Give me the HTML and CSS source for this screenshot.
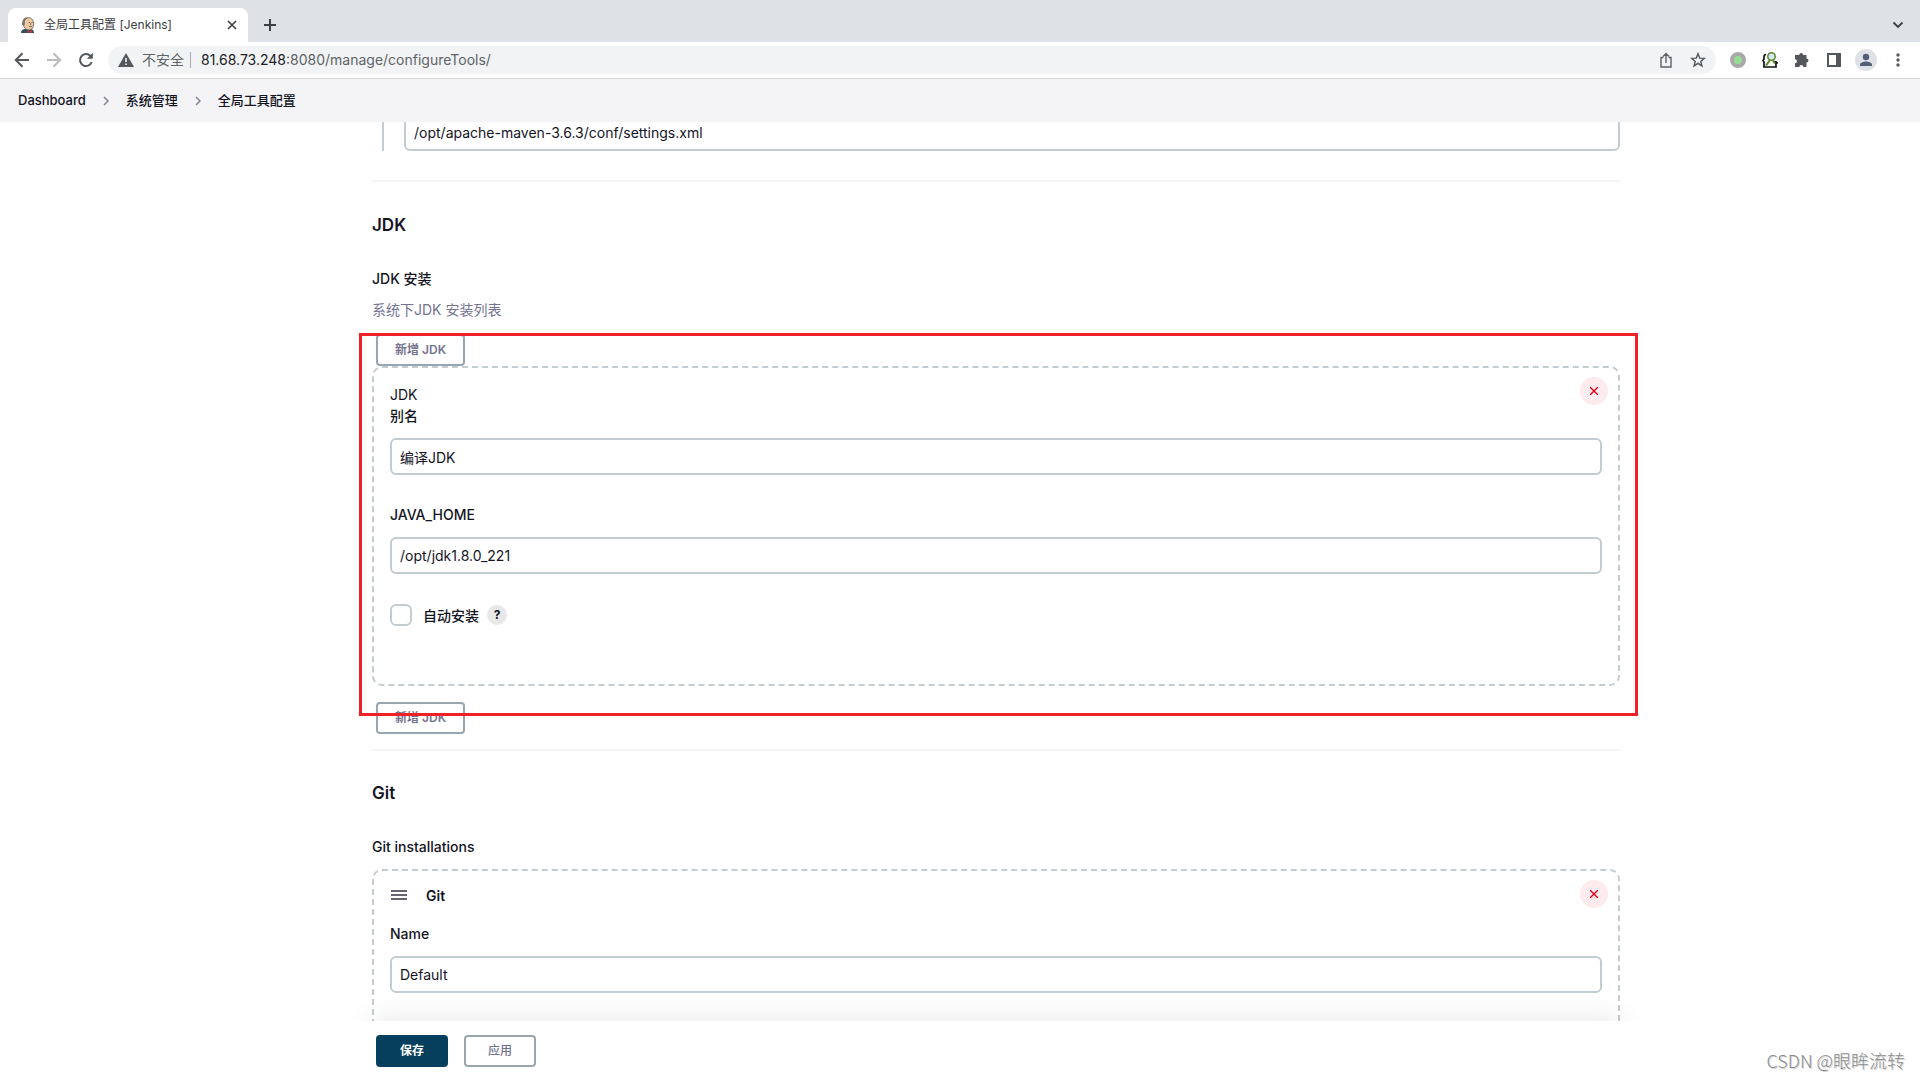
FILE: index.html
```html
<!DOCTYPE html>
<html lang="zh-CN">
<head>
<meta charset="utf-8">
<title>全局工具配置 [Jenkins]</title>
<link rel="stylesheet" href="styles.css">
</head>
<body>
<div class="tabstrip">
  <div class="tab">
    <svg class="favicon" width="16" height="16" viewBox="0 0 16 16"><path d="M1 16c0-3 2-4 4-4h5c3 0 4 2 4 4z" fill="#335061"/><path d="M3 5C3 1.500 5.500.7 8 .7s5.600 1.300 5.600 5.800c0 4-1.600 6.500-4.600 6.500-3.500 0-6-3-6-8z" fill="#edc9a0" stroke="#49423d" stroke-width=".7"/><path d="M3 4c.6-2.500 2.500-3 4.500-3L5 3.500 4.700 8 3.300 9C1.500 7.500 2 6 3 4z" fill="#77716b"/><path d="M8.500 5.500h1.500m1.500 0h1M9 9.500h3M10.700 6v2" stroke="#594335" stroke-width=".7" fill="none"/><path d="M7.500 13l2 1.200 2-1.200v3l-2-.8-2 .8z" fill="#d33833"/></svg>
    <span class="tab-title">全局工具配置 [Jenkins]</span>
    <button class="icon-btn" aria-label="关闭标签页"><svg width="10" height="10" viewBox="0 0 10 10"><path d="M1 1l8 8M9 1L1 9" stroke="#3c4043" stroke-width="1.600"/></svg></button>
  </div>
  <button class="icon-btn new-tab" aria-label="新标签页"><svg width="14" height="14" viewBox="0 0 14 14"><path d="M7 1v12M1 7h12" stroke="#3c4043" stroke-width="2"/></svg></button>
  <button class="icon-btn tab-search" aria-label="搜索标签页"><svg width="12" height="8" viewBox="0 0 12 8"><path d="M1.500 1.500L6 6l4.500-4.500" fill="none" stroke="#3c4043" stroke-width="1.800"/></svg></button>
</div>
<div class="toolbar">
  <div class="nav">
    <button class="icon-btn" aria-label="后退"><svg width="16" height="16" viewBox="0 0 16 16"><path d="M15 8H2M8.500 1.300L1.800 8l6.700 6.700" fill="none" stroke="#54585d" stroke-width="2"/></svg></button>
    <button class="icon-btn" aria-label="前进"><svg width="16" height="16" viewBox="0 0 16 16"><path d="M1 8h13M7.500 1.300L14.200 8l-6.700 6.700" fill="none" stroke="#bbbdbf" stroke-width="2"/></svg></button>
    <button class="icon-btn" aria-label="重新加载"><svg width="16" height="16" viewBox="0 0 16 16"><path d="M13.700 10a6 6 0 1 1-1.200-6" fill="none" stroke="#54585d" stroke-width="2"/><path d="M14.800.8v6H8.800z" fill="#54585d"/></svg></button>
  </div>
  <div class="omnibox">
    <svg width="16" height="14" viewBox="0 0 16 14"><path d="M8 0l8 14H0z" fill="#54585d"/><path d="M8 5v4M8 10.500v1.500" stroke="#f1f3f4" stroke-width="1.600"/></svg>
    <span class="insecure">不安全</span>
    <span class="url"><b>81.68.73.248</b>:8080/manage/configureTools/</span>
    <button class="icon-btn" aria-label="分享"><svg width="12" height="16" viewBox="0 0 12 16"><path d="M3.500 5.500H1V15h10V5.500H8.500M6 11V2M3 4.500l3-3 3 3" fill="none" stroke="#5f6368" stroke-width="1.400"/></svg></button>
    <button class="icon-btn star" aria-label="收藏"><svg width="16" height="16" viewBox="0 0 16 16"><path d="M8 1.800l1.700 4.300 4.600.3-3.500 3 1.100 4.500L8 11.400l-3.900 2.500 1.100-4.500-3.500-3 4.600-.3z" fill="none" stroke="#54585d" stroke-width="1.400"/></svg></button>
  </div>
  <div class="extensions">
    <svg width="16" height="16" viewBox="0 0 16 16"><circle cx="8" cy="8" r="6" fill="#95dc94" stroke="#a9a7aa" stroke-width="4"/></svg>
    <svg width="16" height="16" viewBox="0 0 16 16"><path d="M4 2.500Q2 2.500 2 5v2L1 8.500 2 10v5h12v-3.500l1-.7-1-1h-2" fill="none" stroke="#111" stroke-width="1.700"/><circle cx="9.500" cy="4.500" r="3.700" fill="#d7e8f8" stroke="#568629" stroke-width="1.500"/><path d="M8 8l-4 5.500M11 8.500l2 3" stroke="#568629" stroke-width="2"/></svg>
    <svg width="16" height="16" viewBox="0 0 16 16"><path d="M2 3h3.200a2 2 0 0 1 4 0h3.300v3.500a2 2 0 0 1 0 4V15H9.400a2 2 0 0 0-4 0H1v-3.800a2 2 0 0 0 0-4V3z" fill="#54585d"/></svg>
    <svg width="16" height="16" viewBox="0 0 16 16"><path d="M1 1h14v14H1z" fill="#54585d"/><path d="M3 3h7v10H3z" fill="#fff"/></svg>
  </div>
  <svg class="avatar" width="22" height="22" viewBox="0 0 22 22"><circle cx="11" cy="11" r="11" fill="#dee1e6"/><circle cx="11" cy="8" r="3.200" fill="#535e76"/><path d="M5 17v-1.500c0-2 4-3 6-3s6 1 6 3V17z" fill="#535e76"/></svg>
  <button class="icon-btn menu" aria-label="菜单"><svg width="4" height="14" viewBox="0 0 4 14"><g fill="#54585d"><circle cx="2" cy="2" r="1.700"/><circle cx="2" cy="7" r="1.700"/><circle cx="2" cy="12" r="1.700"/></g></svg></button>
</div>
<nav class="breadcrumbs">
  <a href="#">Dashboard</a>
  <svg width="6" height="10" viewBox="0 0 6 10"><path d="M1 1l4 4-4 4" fill="none" stroke="#82828c" stroke-width="1.500"/></svg>
  <a href="#">系统管理</a>
  <svg width="6" height="10" viewBox="0 0 6 10"><path d="M1 1l4 4-4 4" fill="none" stroke="#82828c" stroke-width="1.500"/></svg>
  <a href="#">全局工具配置</a>
</nav>
<main class="page">
  <form class="config" id="config">
    <div class="nested"><input class="text" type="text" aria-label="文件路径" value="/opt/apache-maven-3.6.3/conf/settings.xml"></div>
    <section class="section">
      <h2>JDK</h2>
      <div class="label">JDK 安装</div>
      <div class="description">系统下JDK 安装列表</div>
      <div class="list">
        <button type="button" class="btn">新增 JDK</button>
        <div class="chunk">
          <button type="button" class="delete" aria-label="删除"><svg width="8" height="8" viewBox="0 0 8 8"><path d="M0 0l8 8M8 0L0 8" stroke="#e6001f" stroke-width="1.400"/></svg></button>
          <div class="kind">JDK</div>
          <div class="field"><label class="label" for="jdk-name">别名</label><input class="text" id="jdk-name" type="text" value="编译JDK"></div>
          <div class="field"><label class="label" for="java-home">JAVA_HOME</label><input class="text" id="java-home" type="text" value="/opt/jdk1.8.0_221"></div>
          <div class="check"><input type="checkbox" id="auto"><label class="label" for="auto">自动安装</label><button type="button" class="help">?</button></div>
        </div>
        <button type="button" class="btn last">新增 JDK</button>
        <div class="highlight"></div>
      </div>
    </section>
    <section class="section">
      <h2>Git</h2>
      <div class="label">Git installations</div>
      <div class="chunk">
        <button type="button" class="delete" aria-label="删除"><svg width="8" height="8" viewBox="0 0 8 8"><path d="M0 0l8 8M8 0L0 8" stroke="#e6001f" stroke-width="1.400"/></svg></button>
        <div class="chunk-title"><svg width="16" height="10" viewBox="0 0 16 10"><path d="M0 1h16M0 5h16M0 9h16" stroke="#333344" stroke-width="1.500"/></svg>Git</div>
        <div class="field"><label class="label" for="git-name">Name</label><input class="text" id="git-name" type="text" value="Default"></div>
      </div>
    </section>
  </form>
</main>
<footer class="actions">
  <button class="btn primary" form="config">保存</button>
  <button type="button" class="btn apply">应用</button>
</footer>
<div class="watermark">CSDN @眼眸流转</div>
</body>
</html>
```
FILE: styles.css
```css
* { box-sizing: border-box; }
body {
  margin: 0;
  height: 100vh;
  display: flex;
  flex-direction: column;
  position: relative;
  overflow: hidden;
  background: #fff;
  color: #14141f;
  font: 14px/21px Inter, "Noto Sans CJK SC", sans-serif;
}
svg { display: block; flex: none; }
button, input { font: inherit; color: inherit; margin: 0; }
.icon-btn { border: 0; padding: 0; background: none; flex: none; }

.tabstrip {
  display: flex;
  align-items: center;
  height: 42px;
  flex: none;
  padding: 8px 16px 0 8px;
  background: #dee1e6;
}
.tab {
  display: flex;
  align-items: center;
  width: 240px;
  height: 34px;
  padding: 0 11px 0 12px;
  border-radius: 8px 8px 0 0;
  background: #fff;
}
.tab-title {
  flex: 1;
  margin-left: 8px;
  color: #3c4043;
  font-size: 12px;
  line-height: 16px;
}
.new-tab { margin-left: 15px; }
.tab-search { margin-left: auto; }

.toolbar {
  display: flex;
  align-items: center;
  flex: none;
  height: 37px;
  padding: 0 20px 0 14px;
  border-bottom: 1px solid #d5d7da;
  background: #fff;
}
.nav { display: flex; gap: 16px; }
.omnibox {
  flex: 1;
  display: flex;
  align-items: center;
  height: 28px;
  margin-left: 14px;
  padding: 0 10px;
  border-radius: 14px;
  background: #f1f3f4;
  color: #5f6368;
  line-height: 18px;
}
.insecure {
  margin: 0 10px 0 8px;
  padding-right: 6px;
  border-right: 1px solid #a8abaf;
  line-height: 16px;
}
.url { flex: 1; }
.url b { font-weight: 400; color: #202124; }
.star { margin-left: 18px; }
.extensions { display: flex; gap: 16px; margin-left: 14px; }
.avatar { margin-left: 13px; }
.menu { margin-left: 19px; }

.breadcrumbs {
  display: flex;
  align-items: center;
  gap: 17px;
  flex: none;
  height: 43px;
  padding: 0 18px;
  background: #f4f4f7;
  font-size: 13px;
  font-weight: 500;
}
.breadcrumbs a { color: inherit; text-decoration: none; }

.page {
  flex: 1;
  min-height: 0;
  overflow: hidden;
  padding: 0 300px 0 372px;
}
.config { margin-top: -8px; }
.nested {
  margin-left: 10px;
  padding-left: 20px;
  border-left: 2px solid #c3ccd1;
}
.text {
  display: block;
  width: 100%;
  height: 37px;
  padding: 0 8px;
  border: 2px solid #c3ccd1;
  border-radius: 6px;
  background: #fff;
}
.section {
  margin-top: 29px;
  padding-top: 31px;
  border-top: 2px solid #f3f3f8;
}
.section + .section { margin-top: 15px; padding-top: 30px; }
h2 { margin: 0 0 31px; font-size: 17px; line-height: 24px; font-weight: 600; }
.label { display: block; margin-bottom: 12px; font-weight: 500; }
.description { color: #737390; line-height: 18px; }
.list { position: relative; margin-top: 15px; }
.btn {
  display: block;
  height: 32px;
  min-width: 72px;
  margin-left: 4px;
  padding: 0 17px;
  border: 2px solid #98a6af;
  border-radius: 4px;
  background: #fff;
  color: #737390;
  font-size: 12px;
  line-height: 16px;
  font-weight: 600;
}
.btn.last { margin-top: 16px; }
.chunk {
  position: relative;
  padding: 16px 16px 57px;
  border: 2px dashed #c3ccd1;
  border-radius: 10px;
}
.field { margin-bottom: 29px; }
.check { display: flex; align-items: center; height: 24px; }
.check input {
  appearance: none;
  width: 22px;
  height: 22px;
  border: 2px solid #c3ccd1;
  border-radius: 6px;
}
.check .label { margin: 0 8px 0 11px; }
.help {
  width: 20px;
  height: 20px;
  padding: 0;
  border: 0;
  border-radius: 50%;
  background: #e8e8e8;
  font-size: 12px;
  line-height: 20px;
  font-weight: 700;
}
.delete {
  position: absolute;
  top: 9px;
  right: 10px;
  display: grid;
  place-items: center;
  width: 28px;
  height: 28px;
  padding: 0;
  border: 0;
  border-radius: 50%;
  background: #fdebed;
}
.chunk-title {
  display: flex;
  align-items: center;
  gap: 19px;
  height: 16px;
  margin: 0 0 20px 1px;
  font-weight: 600;
}
.highlight {
  position: absolute;
  inset: -1px -18px 18px -13px;
  border: 3px solid #f02027;
  pointer-events: none;
}

.actions {
  display: flex;
  gap: 12px;
  position: relative;
  flex: none;
  height: 59px;
  padding: 14px 300px 0 372px;
  background: #fff;
}
/* Soft shadow cast upwards only, over the scrolled form */
.actions::before {
  content: "";
  position: absolute;
  inset: 0 300px 0 372px;
  box-shadow: 0 0 30px rgba(0, 0, 0, 0.1);
  clip-path: inset(-40px -40px 100% -40px);
  pointer-events: none;
}
.btn.primary { border-color: #063f5e; background: #063f5e; color: #fff; }
.btn.apply { font-weight: 500; }

.watermark {
  position: absolute;
  right: 15px;
  bottom: 8px;
  color: #8c8c8c;
  font: 300 18px/24px "Noto Sans CJK SC", sans-serif;
  text-shadow: 1px 1px 0 #d4d4d4;
}
```
